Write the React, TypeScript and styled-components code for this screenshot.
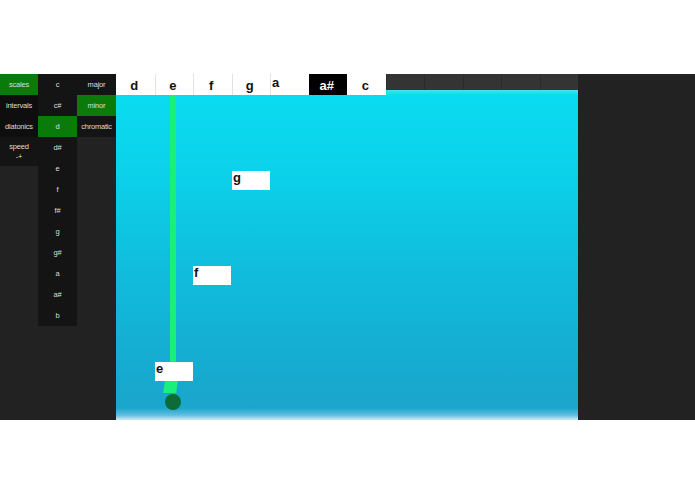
import React from "react";
import styled, { createGlobalStyle } from "styled-components";

const Global = createGlobalStyle`
  html, body { margin: 0; padding: 0; background: #fff; }
  body { font-family: "Liberation Sans", Arial, sans-serif; }
`;

const Stage = styled.div`
  margin-top: 74px;
  height: 346px;
  background: #222;
  display: flex;
  overflow: hidden;
`;

const Menu = styled.div`
  display: flex;
  align-items: flex-start;
  width: 116px;
  flex: none;
`;

const Column = styled.div<{ $w: number }>`
  width: ${(p) => p.$w}px;
  display: flex;
  flex-direction: column;
`;

const Item = styled.div<{ $active?: boolean; $h?: number; $bg?: string }>`
  height: ${(p) => p.$h ?? 21}px;
  background: ${(p) => (p.$active ? "#0a7a0a" : p.$bg ?? "#121212")};
  color: #dcdcdc;
  font-size: 7.5px;
  display: flex;
  flex-direction: column;
  align-items: center;
  justify-content: center;
  line-height: 10px;
  letter-spacing: -0.2px;
`;

const SpeedItem = styled(Item)`
  justify-content: flex-start;
  padding-top: 5px;
  box-sizing: border-box;
`;

const Canvas = styled.div`
  position: relative;
  width: 462px;
  height: 346px;
  flex: none;
  background: linear-gradient(
    to bottom,
    #45e3f3 0px,
    #45e3f3 16px,
    #0adbef 21px,
    #0bd3ea 90px,
    #10bcdc 200px,
    #16aacf 300px,
    #1aa6cc 334px,
    #5fbde0 341px,
    #cfe8f5 346px
  );
`;

const NoteBar = styled.div`
  position: absolute;
  top: 0;
  left: 0;
  right: 0;
  display: flex;
  align-items: flex-start;
`;

const Cell = styled.div<{ $kind: "light" | "black" | "dark"; $left?: boolean; $sep?: boolean }>`
  width: 38.5px;
  flex: none;
  box-sizing: border-box;
  height: ${(p) => (p.$kind === "dark" ? 16 : 21)}px;
  background: ${(p) => (p.$kind === "black" ? "#000" : p.$kind === "dark" ? "#343434" : "#fff")};
  color: ${(p) => (p.$kind === "black" ? "#fff" : "#111")};
  border-left: 1px solid
    ${(p) => (p.$kind === "dark" ? "#2b2b2b" : p.$sep ? "#e2e2e2" : "transparent")};
  font-size: 13px;
  font-weight: bold;
  display: flex;
  align-items: ${(p) => (p.$left ? "flex-start" : "center")};
  justify-content: ${(p) => (p.$left ? "flex-start" : "center")};
  padding-top: 1px;
  padding-left: ${(p) => (p.$left ? 1 : 0)}px;
  padding-right: ${(p) => (p.$left ? 0 : 3)}px;
`;

const Stem = styled.div`
  position: absolute;
  left: 54px;
  top: 21px;
  width: 6px;
  height: 290px;
  background: #19f07c;
`;

const Foot = styled.div`
  position: absolute;
  left: 48px;
  top: 307px;
  width: 13px;
  height: 12px;
  background: #19f07c;
  transform: skewX(-8deg);
`;

const Ball = styled.div`
  position: absolute;
  left: 49px;
  top: 320px;
  width: 16px;
  height: 16px;
  border-radius: 50%;
  background: #0c6b36;
`;

const Label = styled.div`
  position: absolute;
  width: 38px;
  height: 19px;
  background: #fff;
  color: #111;
  font-size: 13px;
  font-weight: bold;
  line-height: 14px;
  padding-left: 1px;
  box-sizing: border-box;
`;

const RightPanel = styled.div`
  flex: 1;
  background: #222;
`;

const col1 = ["scales", "intervals", "diatonics"];
const col2 = ["c", "c#", "d", "d#", "e", "f", "f#", "g", "g#", "a", "a#", "b"];
const col3 = ["major", "minor", "chromatic"];

const bar: { t: string; k: "light" | "black" | "dark"; left?: boolean; sep?: boolean }[] = [
  { t: "d", k: "light" },
  { t: "e", k: "light", sep: true },
  { t: "f", k: "light", sep: true },
  { t: "g", k: "light", sep: true },
  { t: "a", k: "light", left: true, sep: true },
  { t: "a#", k: "black" },
  { t: "c", k: "light" },
  { t: "", k: "dark" },
  { t: "", k: "dark" },
  { t: "", k: "dark" },
  { t: "", k: "dark" },
  { t: "", k: "dark" },
];

const labels = [
  { t: "g", x: 116, y: 97 },
  { t: "f", x: 77, y: 192 },
  { t: "e", x: 39, y: 288 },
];

export default function App() {
  return (
    <>
      <Global />
      <Stage>
        <Menu>
          <Column $w={38}>
            {col1.map((t, i) => (
              <Item key={t} $active={i === 0} $bg="#0e0e0e">
                {t}
              </Item>
            ))}
            <SpeedItem $h={29} $bg="#141414">
              <span>speed</span>
              <span>-+</span>
            </SpeedItem>
          </Column>
          <Column $w={39}>
            {col2.map((t) => (
              <Item key={t} $active={t === "d"} $bg="#141414">
                {t}
              </Item>
            ))}
          </Column>
          <Column $w={39}>
            {col3.map((t) => (
              <Item key={t} $active={t === "minor"} $bg="#141414">
                {t}
              </Item>
            ))}
          </Column>
        </Menu>
        <Canvas>
          <Stem />
          <Foot />
          <Ball />
          {labels.map((l) => (
            <Label key={l.t} style={{ left: l.x, top: l.y }}>
              {l.t}
            </Label>
          ))}
          <NoteBar>
            {bar.map((c, i) => (
              <Cell key={i} $kind={c.k} $left={c.left} $sep={c.sep}>
                {c.t}
              </Cell>
            ))}
          </NoteBar>
        </Canvas>
        <RightPanel />
      </Stage>
    </>
  );
}
